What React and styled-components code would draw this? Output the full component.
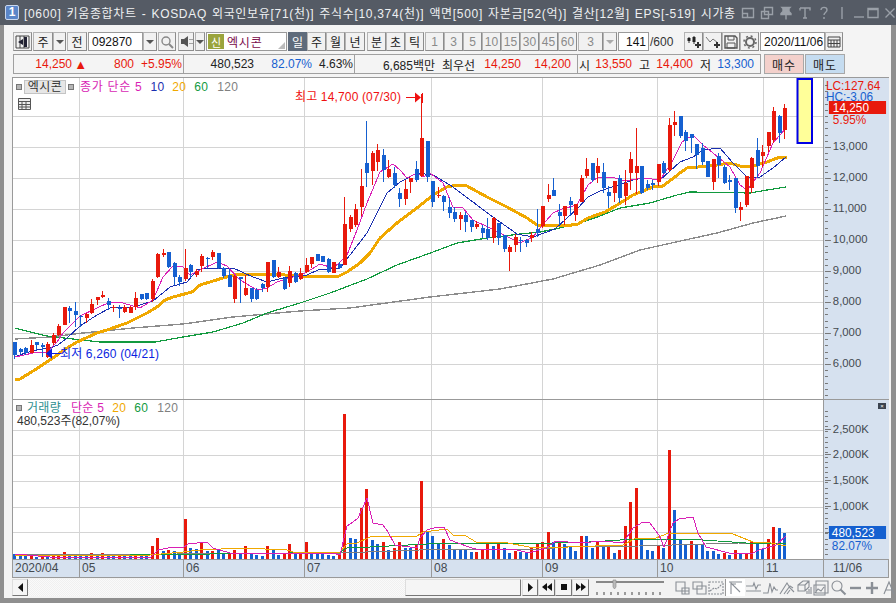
import React from "react";
import styled, { createGlobalStyle } from "styled-components";

const FONT = `"Liberation Sans", "Noto Sans CJK KR", sans-serif`;
const RED = "#e8190c";
const BLUE = "#1560d0";
const TXT = "#444a50";

const Global = createGlobalStyle`
  html, body { margin: 0; padding: 0; background: #f4f4f4; overflow: hidden; }
  * { box-sizing: border-box; }
`;

const Window = styled.div`
  width: 896px; height: 603px; display: flex; flex-direction: column;
  font-family: ${FONT}; font-size: 12px; color: #222; background: #f4f4f4;
`;
const TitleBar = styled.div`
  height: 25px; flex: none; background: #555b65; display: flex; align-items: center; padding: 0 6px 0 5px; color: #eef0f2;
`;
const Badge = styled.div`
  width: 14px; height: 15px; border-radius: 2px; background: #5b86c9; border: 1px solid #c9d7ee;
  color: #fff; font-weight: 700; font-size: 12px; line-height: 13px; text-align: center; flex: none;
`;
const TitleText = styled.div`
  margin-left: 5px; width: 716px; flex: none; font-size: 12px; letter-spacing: 0.68px; white-space: nowrap; overflow: hidden; word-spacing: 1px;
`;
const TitleIcons = styled.div`
  display: flex; align-items: center; margin-left: 1px;
`;
const TitleIcon = styled.svg`
  width: 14px; height: 14px; margin-right: ${p => p.$mr ?? 5}px; fill: none; stroke: #9aa0a8; stroke-width: 1.4; flex: none;
`;
const Body = styled.div`
  flex: 1; display: flex; flex-direction: column; padding: 7px 2px 2px 8px; background: #f4f4f4;
  border-left: 4px solid #8f8f8f; border-right: 5px solid #8f8f8f; border-bottom: 5px solid #8f8f8f;
`;
const Toolbar = styled.div`
  display: flex; height: 19px; padding-left: 1px; flex: none;
`;
const Btn = styled.div`
  width: ${p => p.$w}px; margin-left: ${p => p.$ml ?? 0}px; height: 19px; flex: none;
  display: flex; align-items: center; justify-content: center;
  background: ${p => p.$on ? "#5f6b7b" : "#f1f1f1"}; color: ${p => p.$on ? "#fff" : p.$dim ? "#8a8a8a" : "#222"};
  border: 1px solid ${p => p.$on ? "#5f6b7b" : "#b4b4b4"}; border-right-color: ${p => p.$on ? "#5f6b7b" : "#8c8c8c"}; border-bottom-color: ${p => p.$on ? "#5f6b7b" : "#8c8c8c"};
  font-size: 12px; white-space: nowrap;
`;
const Input = styled.div`
  width: ${p => p.$w}px; margin-left: ${p => p.$ml ?? 0}px; height: 19px; flex: none; background: #fff;
  border: 1px solid #9a9a9a; display: flex; align-items: center; justify-content: ${p => p.$right ? "flex-end" : "flex-start"};
  padding: 0 ${p => p.$right ? 2 : 3}px; font-size: 12px; color: #111; position: relative; white-space: nowrap;
`;
const NameTag = styled.span`
  width: 16px; height: 15px; margin-left: -2px; background: #9aa43c; color: #fff; display: flex; align-items: center; justify-content: center; font-size: 11px; margin-right: 3px; flex: none;
`;
const NameText = styled.span`
  color: #7a0a4a; font-size: 12px; letter-spacing: .8px;
`;
const Corner = styled.span`
  position: absolute; right: 1px; bottom: 1px; width: 0; height: 0; border-left: 7px solid transparent; border-bottom: 7px solid #bbb;
`;
const PlainLabel = styled.div`
  margin-left: 1px; width: 34px; flex: none; display: flex; align-items: center; font-size: 12px; color: #333;
`;
const Arrow = styled.span`
  width: 0; height: 0; border-left: 4px solid transparent; border-right: 4px solid transparent; border-top: 4px solid ${p => p.$c || "#555"};
`;
const InfoBar = styled.div`
  display: flex; height: 20px; margin: 3px 0 3px 1px; flex: none;
`;
const InfoGroup = styled.div`
  width: ${p => p.$w}px; height: 20px; flex: none; display: flex; align-items: center; position: relative;
  background: #f4f4f4; border: 1px solid #a0a0a0; border-left-width: ${p => p.$first ? 1 : 0}px; white-space: nowrap;
`;
const Val = styled.span`
  width: ${p => p.$w}px; flex: none; text-align: right; color: ${p => p.$c || "#222"}; font-size: ${p => p.$s || 12}px;
`;
const Trade = styled.div`
  width: ${p => p.$w}px; margin-left: ${p => p.$ml}px; height: 20px; flex: none; display: flex; align-items: center; justify-content: center;
  background: ${p => p.$bg}; border: 1px solid #a8a8a8; font-size: 12px; letter-spacing: 1px; color: #222;
`;
const Chart = styled.div`
  width: 877px; display: flex; flex-direction: column; border: 1px solid #9a9a9a; border-bottom: 0; flex: none; background: #fff;
`;
const Pane = styled.div`
  display: flex; height: ${p => p.$h}px; position: relative; flex: none; border-bottom: 1px solid #999;
`;
const Plot = styled.svg`
  width: 810px; height: 100%; display: block; flex: none; background: #fff; border-right: 0;
`;
const Axis = styled.svg`
  width: 66px; height: 100%; display: block; flex: none; background: #d6e1ef; border-left: 1px solid #999;
`;
const Legend = styled.div`
  position: absolute; left: ${p => p.$x}px; top: ${p => p.$y}px; display: flex; align-items: center; white-space: nowrap; font-size: 12px; line-height: 14px;
`;
const LegendItem = styled.span`
  color: ${p => p.$c}; margin-left: ${p => p.$ml ?? 8}px; letter-spacing: ${p => p.$ls ?? 0.3}px;
`;
const Sq = styled.span`
  width: 6px; height: 6px; background: #b5b5b5; border: 1px solid #777; display: inline-block; flex: none;
`;
const Chip = styled.span`
  margin-left: 2px; margin-right: 2px; width: 42px; height: 14px; background: #e6e6e6; border: 1px solid #c4c4c4; color: #333; display: flex; align-items: center; justify-content: center; font-size: 12px; letter-spacing: .5px;
`;
const GridIcon = styled.svg`
  position: absolute; left: 5px; top: 20px; width: 13px; height: 12px;
`;
const CloseMini = styled.span`
  position: absolute; right: 2px; top: 3px; width: 8px; height: 6px; background: #3c4450; color: #fff; font-size: 6px; line-height: 6px; text-align: center;
`;
const VolInfo = styled.div`
  position: absolute; left: 4px; top: 14px; font-size: 12px; color: #333; line-height: 14px; white-space: nowrap;
`;
const DateAxis = styled.div`
  display: flex; height: 18px; flex: none; background: #d6e1ef; border-bottom: 1px solid #999;
`;
const DateCell = styled.div`
  width: ${p => p.$w}px; flex: none; height: 100%; border-right: 1px solid #999; color: ${TXT}; font-size: 12px; line-height: 17px; padding-left: ${p => p.$pl ?? 2}px;
`;
const BottomBar = styled.div`
  height: 18px; width: 877px; display: flex; flex: none; align-items: center; background: #f2f2f2;
`;
const NavBtn = styled.div`
  width: ${p => p.$w ?? 16}px; margin-left: ${p => p.$ml ?? 0}px; height: 17px; flex: none; display: flex; align-items: center; justify-content: center;
  background: #f5f5f5; border: 1px solid #ddd; border-right-color: #777; border-bottom-color: #777;
`;
const Track = styled.div`
  width: 377px; height: 17px; flex: none; background: repeating-conic-gradient(#f0f0f0 0 25%, #fafafa 0 50%) 0 0 / 2px 2px;
`;
const Tool = styled.svg`
  width: ${p => p.$w ?? 17}px; height: 17px; flex: none; fill: none; stroke: #8a8f96; stroke-width: 1.1; background: ${p => p.$bg || "transparent"};
  border-left: ${p => p.$div ? "1px solid #999" : "0"};
`;
const Slider = styled.svg`
  width: 75px; height: 17px; margin-left: 5px; margin-right: 5px; flex: none;
`;

const seg = (base, arr) => arr.map(([c, a, b, d, e]) => [c, base + a / 3, base + b / 3, base + d / 3, base + e / 3]);
const r = "r", b = "b";
const candles = [
  ...seg(240, [[b,305,305,345,358],[b,325,328,335,342],[b,322,325,340,345],[r,300,316,340,340],[b,307,307,316,330],[b,310,314,322,350],[r,305,312,350,355],[r,280,285,310,315],[r,252,258,285,288],[r,200,202,255,255],
  [b,198,204,214,250],[b,186,213,225,260],[b,225,228,232,260],[r,220,222,235,250],[r,178,192,220,222],[r,170,172,180,195],[r,153,165,172,175],[b,175,183,195,210],[r,195,200,205,215],[b,195,205,207,233],
  [r,195,200,215,218],[r,198,200,218,220],[r,155,175,200,210],[b,162,162,178,180],[b,160,160,178,180],[r,118,123,178,185],[r,40,43,112,115],[r,28,38,45,50],[b,35,35,80,85],[b,65,70,112,135],
  [b,105,112,125,138],[r,28,85,118,122],[b,72,75,95,115],[r,88,93,105,110],[r,42,47,78,95],[b,50,55,58,85],[r,30,37,52,60],[b,40,40,85,88],[b,80,85,108,115],[b,88,105,140,142],
  [r,105,108,178,188],[b,110,112,116,188],[r,105,145,165,168],[b,145,145,178,185],[b,145,150,178,180],[b,130,132,145,155],[r,65,67,140,155],[b,60,60,112,115],[r,80,97,110,115],[b,110,113,148,150],
  [r,78,93,130,140],[b,95,100,125,128]]),
  ...seg(90, [[r,535,550,568,570],[r,505,525,545,550],[r,500,502,522,535],[b,492,492,512,514],[b,498,498,515,517],[b,505,507,545,548],[r,517,517,548,548],[b,515,522,535,537],
  [r,322,403,525,525],[r,375,380,417,425],[r,343,357,405,410],[r,238,288,350,378],[b,93,220,248,290],[r,183,188,243,285],[r,162,180,215,243],[b,178,195,240,275],[r,210,238,262,265],[b,232,250,285,293],
  [b,293,308,327,350],[r,270,297,327,345],[r,265,265,277,308],[b,213,237,270,275],[r,12,144,257,260],[b,153,153,260,275],[b,273,273,335,350],[r,292,315,317,325],[b,315,317,335,362],[b,325,350,370,385],
  [b,350,365,387,395],[r,365,375,388,420],[b,365,375,397,425],[b,390,390,412,425],[r,392,402,412,418],[b,405,413,430,445],[b,385,417,443,450],[r,382,385,443,460],[b,400,400,445,465],[b,435,435,477,485],
  [r,465,470,485,543],[r,432,440,465,485],[b,440,450,453,485],[b,447,450,460,470],[r,425,435,445,455],[b,358,417,430,440],[r,348,348,407,415]]),
  ...seg(130, [[r,162,195,207,215],[b,145,180,197,197],[b,222,247,258,285],[r,228,228,258,285],[b,200,213,225,258],[r,222,222,255,272],[r,135,145,215,215],[r,83,117,137,145],[b,100,100,150,155],[r,85,108,128,160]]),
  ...seg(100, [[b,190,215,263,278],[b,258,277,288,325],[r,243,243,278,305],[b,225,235,295,310],[r,210,250,288,315],[r,155,178,218,270],[r,85,198,218,283],[b,198,198,280,283],[b,240,252,265,270],[b,240,248,255,270],
  [r,193,193,245,258],[b,183,188,220,222],[r,55,75,210,215],[r,33,67,75,108],[b,47,47,108,115],[b,90,95,122,152],[b,103,103,115,158],[b,132,132,165,208],[b,130,145,187,195],[b,182,182,230,232],
  [r,178,178,245,270],[b,160,168,195,235],[b,195,200,250,252],[b,225,240,245,270],[b,235,235,323,338],[r,305,322,330,362],[r,228,228,315,320],[r,172,175,265,280],[b,113,150,198,235],[r,135,157,167,200],
  [r,97,97,137,155],[r,22,33,120,130],[b,45,47,100,128],[r,12,25,90,118]]),
];
const vol = "b5 b4 b4 r4 b2 r3 b2 r3 r3 r7 b3 b3 b3 b3 r6 b4 r6 b3 b3 r3 b3 b3 r3 b3 b3 r13 r21 b8 r9 b8 b5 r40 b11 b10 r16 b8 r8 b9 b5 r6 r9 b6 r13 b6 b4 b3 r13 b9 b4 r6 r15 b6 r6 r17 b6 b6 b5 b4 b3 r4 r145 b21 b20 r51 r70 b19 b15 r17 b9 r11 r17 b11 b11 r15 r78 b27 b23 b15 r20 b14 b9 b10 b10 b7 r7 r9 r16 b13 r16 b11 b6 r8 b7 b6 r11 r16 r17 r27 b17 r17 b15 b12 b8 r23 b23 b11 r17 b12 r14 b6 r9 r33 r57 r71 b19 b9 b8 r13 b11 r109 b49 b19 b14 r18 b14 b15 b8 b8 b5 r6 b4 r9 b6 r6 r17 b16 b10 r20 r32 b31 b26".split(" ");
const cx = i => Math.round(15.3 + 5.5 * i);
const col = c => (c === "r" ? RED : BLUE);

const pts = a => a.join(" ");
const ma5 = pts(["15,357","33,353","47,352","57,342","63,333","80,316","97,308","110,302","123,303","140,308","153,300","163,277","173,266","183,267","190,275","200,270","217,262","227,266","240,280","257,290","267,288","277,282","300,275","307,272","320,264","333,268","339,263","347,255","357,230","367,203","380,172","393,164","400,170","407,178","417,173","423,177","430,173","443,183","453,207","463,208","473,220","490,228","510,238","520,243","533,237","545,222","553,213","562,209","577,205","588,185","598,177","612,177","625,181","643,178","660,180","673,160","682,142","693,135","703,145","713,153","730,167","740,185","747,190","760,173","773,143","786,128"]);
const ma10 = pts(["15,357","25,353","37,350","50,348","58,345","67,338","80,326","97,315","110,308","133,307","153,301","170,287","187,282","197,270","207,268","233,268","253,277","267,282","283,278","300,276","307,275","318,270","340,268","367,233","387,193","400,182","417,173","433,175","450,185","473,202","493,217","517,234","533,237","555,229","578,208","588,197","600,191","612,187","633,180","643,178","660,180","680,162","693,157","703,150","720,148","733,163","747,177","760,177","773,168","786,157"]);
const ma20 = pts(["15,379","20,379","33,371","50,360","67,348","77,342","97,333","107,330","127,323","147,313","157,307","165,300","173,297","192,292","200,285","213,281","223,278","237,274","267,274","302,276","339,276","347,272","360,263","370,253","380,238","397,223","417,208","433,195","447,187","457,185","467,186","487,197","507,207","527,218","537,225","565,226","578,224","588,218","605,212","617,205","633,195","653,187","663,186","680,173","687,168","710,166","730,163","743,167","753,166","767,162","780,157","787,158"]);
const ma60 = pts(["15,328","30,332","47,336","73,339","100,342","123,342","155,342","183,337","213,332","243,323","267,313","300,303","330,293","367,279","397,265","433,252","457,243","487,238","520,234","540,232","560,228","580,223","600,216","620,208","650,203","677,195","690,192","750,193","767,190","786,187"]);
const ma120 = pts(["15,339","50,337","83,333","133,328","183,324","233,317","300,311","350,308","430,297","500,289","553,279","600,265","640,250","685,240","717,233","753,223","786,216"]);
const v5 = pts(["15,554","50,557","127,557","150,558","158,550","173,547","183,548","188,544","207,542","213,548","230,553","283,553","333,553","340,555","347,526","353,522","358,518","367,498","373,523","383,525","388,532","395,545","417,548","420,538","427,530","437,527","444,527","450,540","458,543","469,547","479,550","513,549","529,553","546,548","556,541","579,543","603,541","623,543","633,528","643,522","649,522","659,535","664,547","673,523","679,519","693,517","698,533","706,547","729,553","753,553","759,550","776,545","786,536"]);
const v20 = pts(["15,556","150,555","183,552","200,550","243,548","287,550","293,552","340,552","347,544","357,543","370,537","390,536","417,536","423,532","447,529","453,535","466,536","476,542","508,543","529,547","568,547","623,545","636,538","656,538","669,533","706,533","733,534","753,542","766,542","786,546"]);
const v60 = pts(["15,556","130,555","290,553","340,552","347,548","370,547","446,543","553,543","589,542","636,539","656,539","703,540","746,543","786,543"]);
const v120 = pts(["15,555","340,553","446,549","543,549","566,547","639,546","739,543","786,543"]);

const VX = [79, 183, 304, 431, 542, 657, 763];
const Line = ({ p, c, w = 1 }) => <polyline points={p} fill="none" stroke={c} strokeWidth={w} shapeRendering="crispEdges" strokeLinejoin="round" />;

function PricePlot() {
  const hs = [116, 147, 178, 209, 240, 271, 302, 333, 364];
  return (
    <Plot viewBox="13 78 810 321" preserveAspectRatio="none" style={{ fontFamily: FONT }}>
      {hs.map(y => <rect key={y} x="13" y={y} width="810" height="1" fill="#d4d4d4" />)}
      {VX.map(x => <rect key={x} x={x} y="78" width="1" height="321" fill="#d4d4d4" />)}
      <Line p={ma120} c="#8c8c8c" w={1.4} />
      <Line p={ma60} c="#129a3f" w={1.2} />
      <Line p={ma20} c="#f0a800" w={3} />
      <Line p={ma10} c="#1a2fb0" />
      <Line p={ma5} c="#d91fb5" />
      {candles.map((k, i) => {
        const x = cx(i), h = col(k[0]);
        return <g key={i} shapeRendering="crispEdges">
          <rect x={x - 1} y={k[1]} width="1" height={k[4] - k[1]} fill={h} />
          <rect x={x - 2} y={k[2]} width="4" height={Math.max(1, k[3] - k[2])} fill={h} />
        </g>;
      })}
      <rect x="797.5" y="79" width="14.5" height="64" fill="#ffff99" stroke="#0000e6" strokeWidth="2" />
      <text x="295" y="101" fontSize="12" letterSpacing=".15" fill="#f01010">최고 14,700 (07/30)</text>
      <rect x="406" y="97" width="10" height="1" fill="#f01010" />
      <path d="M415 92.5 L421 97.5 L415 102.5Z" fill="#f01010" />
      <rect x="422" y="93" width="1" height="10" fill="#f01010" />
      <text x="60" y="358" fontSize="12" letterSpacing=".15" fill="#0a1fe0">최저 6,260 (04/21)</text>
      <rect x="50" y="353" width="11" height="1" fill="#0a1fe0" />
      <path d="M52 348 L46 353.5 L52 359Z" fill="#0a1fe0" />
    </Plot>
  );
}

function VolPlot() {
  return (
    <Plot viewBox="13 400 810 159" preserveAspectRatio="none">
      {[430, 455, 481, 507, 532].map(y => <rect key={y} x="13" y={y} width="810" height="1" fill="#d4d4d4" />)}
      {VX.map(x => <rect key={x} x={x} y="400" width="1" height="159" fill="#d4d4d4" />)}
      {vol.map((v, i) => {
        const h = +v.slice(1);
        return <rect key={i} x={cx(i) - 2} y={559 - h} width="3" height={h} fill={col(v[0])} shapeRendering="crispEdges" />;
      })}
      <Line p={v120} c="#808080" w={1} />
      <Line p={v60} c="#129a3f" w={1} />
      <Line p={v20} c="#f0a800" w={1} />
      <Line p={v5} c="#d91fb5" />
    </Plot>
  );
}

const ticks = (from, to, step) => { const o = []; for (let y = from; y < to; y += step) o.push(y); return o; };

function PriceAxis() {
  const labels = [["13,000", 147], ["12,000", 178], ["11,000", 209], ["10,000", 240], ["9,000", 271], ["8,000", 302], ["7,000", 333], ["6,000", 364]];
  return (
    <Axis viewBox="823 78 66 321" preserveAspectRatio="none" style={{ fontFamily: FONT }}>
      {ticks(85, 397, 6.2).map(y => <rect key={y} x="824" y={Math.round(y)} width="3" height="1" fill="#777" />)}
      {labels.map(([t, y]) => <g key={t}>
        <rect x="824" y={y} width="6" height="1" fill="#777" />
        <text x="832" y={y + 3} fontSize="11.5" fill={TXT}>{t}</text>
      </g>)}
      <text x="825" y="90" fontSize="12" fill={RED}>LC:127.64</text>
      <text x="825" y="101" fontSize="12" fill={BLUE}>HC:-3.06</text>
      <rect x="828" y="101" width="58" height="13" fill={RED} />
      <text x="832" y="112" fontSize="12" fill="#fff">14,250</text>
      <text x="832" y="124" fontSize="12" fill={RED}>5.95%</text>
    </Axis>
  );
}

function VolAxis() {
  const labels = [["2,500K", 429], ["2,000K", 454], ["1,500K", 480], ["1,000K", 506], ["500K", 532]];
  return (
    <Axis viewBox="823 400 66 159" preserveAspectRatio="none" style={{ fontFamily: FONT }}>
      {ticks(411, 558, 5.1).map(y => <rect key={y} x="824" y={Math.round(y)} width="3" height="1" fill="#777" />)}
      {labels.map(([t, y]) => <g key={t}>
        <rect x="824" y={y} width="6" height="1" fill="#777" />
        <text x="832" y={y + 4} fontSize="11.5" fill={TXT}>{t}</text>
      </g>)}
      <rect x="828" y="526" width="58" height="13" fill={BLUE} />
      <text x="831" y="537" fontSize="12" fill="#fff">480,523</text>
      <text x="831" y="550" fontSize="12" fill={BLUE}>82.07%</text>
    </Axis>
  );
}

const T = ({ d, mr, f }) => <TitleIcon viewBox="0 0 14 14" $mr={mr}><path d={d} fill={f || "none"} /></TitleIcon>;

const Ico = ({ w = 16, h = 15, children }) => (
  <svg width={w} height={h} viewBox={`0 0 ${w} ${h}`} fill="none">{children}</svg>
);

export default function App() {
  const nums = ["1", "3", "5", "10", "15", "30", "45", "60"];
  return (
    <Window>
      <Global />
      <TitleBar>
        <Badge>1</Badge>
        <TitleText>[0600] 키움종합차트 - KOSDAQ 외국인보유[71(천)] 주식수[10,374(천)] 액면[500] 자본금[52(억)] 결산[12월] EPS[-519] 시가총</TitleText>
        <TitleIcons>
          <T d="M1.5 2.5h11v9h-11zM1.5 7.5h5v4" />
          <T d="M4.5 1.5h8v7h-8zM1.5 5.5h7v7h-7z" />
          <T d="M3 1.5h8l-1 1v3l2 2v1H2V7.5l2-2v-3zM7 8.5v5" f="#9aa0a8" />
          <T d="M2 2h10v2.5M2 2v2.5M7 2v10M5 12h4" />
          <T d="M4 4c0-3.5 6-3.5 6 0 0 2.5-3 2.5-3 5M7 11v2" mr={4} />
          <T d="M7 1v12" mr={3} />
          <T d="M2 11h10" mr={0} />
          <T d="M2 2.5h10v9H2zM2 3.5h10" mr={3} />
          <T d="M2.5 2.5l9 9M11.5 2.5l-9 9" mr={0} />
        </TitleIcons>
      </TitleBar>
      <Body>
        <Toolbar>
          <Btn $w={19}><Ico w={15} h={15}><path d="M1 2h13v12H1z" stroke="#444" /><path d="M5 2v12M9 2v12" stroke="#444" /><path d="M8 5L3 8l5 3zM9 3h3v10H9z" fill="#223" /></Ico></Btn>
          <Btn $w={20} $ml={1}>주</Btn>
          <Btn $w={13}><Arrow /></Btn>
          <Btn $w={20} $ml={1}>전</Btn>
          <Input $w={55} $ml={1}>092870</Input>
          <Btn $w={14}><Arrow /></Btn>
          <Btn $w={18} $ml={1}><Ico w={14} h={14}><circle cx="6" cy="6" r="4" stroke="#888" strokeWidth="1.4" /><path d="M9 9l4 4" stroke="#888" strokeWidth="2" /></Ico></Btn>
          <Btn $w={16} $ml={2}><Ico w={13} h={13}><path d="M1 4h3l4-3v11L4 9H1z" fill="#555" /><path d="M10 4v1M10 8v1M12 4v1M12 8v1" stroke="#555" /></Ico></Btn>
          <Btn $w={10} $ml={1}><Arrow /></Btn>
          <Input $w={81} $ml={1}>
            <NameTag>신</NameTag><NameText>엑시콘</NameText><Corner />
          </Input>
          <Btn $w={19} $ml={1} $on>일</Btn>
          <Btn $w={19}>주</Btn>
          <Btn $w={19}>월</Btn>
          <Btn $w={20}>년</Btn>
          <Btn $w={19} $ml={2}>분</Btn>
          <Btn $w={19}>초</Btn>
          <Btn $w={19}>틱</Btn>
          {nums.map((n, i) => <Btn key={n} $w={19} $ml={i === 0 ? 1 : 0} $dim>{n}</Btn>)}
          <Btn $w={25} $ml={1} $dim>3</Btn>
          <Btn $w={14} $dim><Arrow $c="#aaa" /></Btn>
          <Input $w={31} $ml={1} $right>141</Input>
          <PlainLabel>/600</PlainLabel>
          <Btn $w={19} $ml={0}><Ico w={16} h={15}><path d="M3 3v6M8 2v8" stroke="#333" /><path d="M1.5 4h3v3h-3zM6.5 3h3v5h-3z" fill="#222" /><path d="M12 8v6M9 11h6" stroke="#333" strokeWidth="2" /></Ico></Btn>
          <Btn $w={19}><Ico w={16} h={15}><path d="M1 3l4 5 3-3 5 4" stroke="#777" /><path d="M12 8v6M9 11h6" stroke="#333" strokeWidth="2" /></Ico></Btn>
          <Btn $w={18}><Ico w={14} h={14}><path d="M1 1h10l2 2v10H1z" stroke="#555" strokeWidth="1.4" /><path d="M4 1v4h6V1M3 8h8v5H3z" stroke="#555" /></Ico></Btn>
          <Btn $w={19}><Ico w={14} h={14}><circle cx="7" cy="7" r="4" stroke="#666" strokeWidth="2" /><circle cx="7" cy="7" r="6" stroke="#666" strokeWidth="1.5" strokeDasharray="2 2.7" /></Ico></Btn>
          <Input $w={65} $ml={1}>2020/11/06</Input>
          <Btn $w={18}><Ico w={14} h={12}><path d="M1 1h12v10H1zM1 4h12M4 4v7M7 4v7M10 4v7M1 7.5h12" stroke="#444" /></Ico></Btn>
        </Toolbar>
        <InfoBar>
          <InfoGroup $w={171} $first>
            <Val $w={58} $c={RED}>14,250</Val>
            <Val $w={15} $c={RED} $s={13}>▲</Val>
            <Val $w={47} $c={RED}>800</Val>
            <Val $w={48} $c={RED}>+5.95%</Val>
          </InfoGroup>
          <InfoGroup $w={171}>
            <Val $w={70}>480,523</Val>
            <Val $w={58} $c={BLUE}>82.07%</Val>
            <Val $w={41}>4.63%</Val>
          </InfoGroup>
          <InfoGroup $w={223}>
            <Val $w={80}>6,685백만</Val>
            <Val $w={40}>최우선</Val>
            <Val $w={46} $c={RED}>14,250</Val>
            <Val $w={50} $c={RED}>14,200</Val>
          </InfoGroup>
          <InfoGroup $w={183}>
            <Val $w={12}>시</Val>
            <Val $w={42} $c={RED}>13,550</Val>
            <Val $w={18}>고</Val>
            <Val $w={43} $c={RED}>14,400</Val>
            <Val $w={18}>저</Val>
            <Val $w={43} $c={BLUE}>13,300</Val>
          </InfoGroup>
          <Trade $w={40} $ml={3} $bg="#f3d0cb">매수</Trade>
          <Trade $w={40} $ml={1} $bg="#c5dcf0">매도</Trade>
        </InfoBar>
        <Chart>
          <Pane $h={322}>
            <PricePlot />
            <PriceAxis />
            <Legend $x={3} $y={2}>
              <Sq /><Chip>엑시콘</Chip><Sq />
              <LegendItem $c="#d91fb5" $ml={6} $ls={0.7}>종가 단순 5</LegendItem>
              <LegendItem $c="#1a2fb0">10</LegendItem>
              <LegendItem $c="#f0a800">20</LegendItem>
              <LegendItem $c="#129a3f">60</LegendItem>
              <LegendItem $c="#808080" $ml={9}>120</LegendItem>
            </Legend>
            <GridIcon viewBox="0 0 13 12"><path d="M.5.5h12v11H.5zM.5 3.5h12M.5 6.5h12M.5 9h12M4 3.5V12M8 3.5V12" stroke="#555" fill="#eee" /></GridIcon>
          </Pane>
          <Pane $h={160}>
            <VolPlot />
            <VolAxis />
            <Legend $x={3} $y={1}>
              <Sq />
              <LegendItem $c="#2f8f8f" $ml={5}>거래량</LegendItem>
              <LegendItem $c="#d91fb5" $ml={10}>단순 5</LegendItem>
              <LegendItem $c="#f0a800">20</LegendItem>
              <LegendItem $c="#129a3f">60</LegendItem>
              <LegendItem $c="#808080" $ml={9}>120</LegendItem>
            </Legend>
            <VolInfo>480,523주(82,07%)</VolInfo>
            <CloseMini>×</CloseMini>
          </Pane>
          <DateAxis>
            <DateCell $w={67}>2020/04</DateCell>
            <DateCell $w={104}>05</DateCell>
            <DateCell $w={121}>06</DateCell>
            <DateCell $w={127}>07</DateCell>
            <DateCell $w={111}>08</DateCell>
            <DateCell $w={115}>09</DateCell>
            <DateCell $w={106}>10</DateCell>
            <DateCell $w={60}>11</DateCell>
            <DateCell $w={65} $pl={9}>11/06</DateCell>
          </DateAxis>
        </Chart>
        <BottomBar>
          <NavBtn><Ico w={7} h={9}><path d="M6 0v9L1 4.5z" fill="#111" /></Ico></NavBtn>
          <Track />
          <NavBtn $w={116} />
          <NavBtn $w={16} $ml={1}><Ico w={7} h={9}><path d="M1 0v9l5-4.5z" fill="#111" /></Ico></NavBtn>
          <NavBtn $w={17}><Ico w={10} h={8}><path d="M5 0v8L0 4zM10 0v8L5 4z" fill="#111" /></Ico></NavBtn>
          <NavBtn $w={17}><Ico w={8} h={8}><path d="M1 1h6v6H1z" fill="#111" /></Ico></NavBtn>
          <NavBtn $w={17}><Ico w={10} h={8}><path d="M0 0v8l5-4zM5 0v8l5-4z" fill="#111" /></Ico></NavBtn>
          <Slider viewBox="0 0 75 17">
            <path d="M2 3h68" stroke="#888" strokeWidth="2" /><path d="M19 1h3v7l-1.5 2L19 8z" fill="#bbb" stroke="#888" strokeWidth=".6" />
            <path d="M3 13v3M10 13v3M17 13v3M24 13v3M31 13v3M38 13v3M45 13v3M52 13v3M59 13v3M66 13v3" stroke="#444" />
          </Slider>
          <Tool viewBox="0 0 17 17"><path d="M2 3h9v9H2zM8 9h7v6H8zM11 9v6M8 12h7" /></Tool>
          <Tool viewBox="0 0 17 17"><path d="M2 3h9v7H2zM6 7h9v8H6z" /></Tool>
          <Tool viewBox="0 0 17 17" strokeDasharray="2 1"><path d="M1 3h14v12H1zM2 12l4-3 3 1 5-5" /></Tool>
          <Tool viewBox="0 0 17 17" $bg="#fff" $div $w={20}><path d="M2 3h13M4 15V4l9 9M4 5l5 0M4 5v5" /></Tool>
          <Tool viewBox="0 0 17 17"><path d="M1 7h7l1-3 2 6 2-4h3M1 12h15" /></Tool>
          <Tool viewBox="0 0 17 17"><path d="M1 14h5l2-10 2 9 2-5 2 3h2" /></Tool>
          <Tool viewBox="0 0 17 17"><path d="M1 15l7-11 3 5 4 4M5 15l6-8 3 2M8 15l3-4" /></Tool>
          <Tool viewBox="0 0 17 17"><path d="M2 6l5-4h6v6l-4 4H2zM2 6h7v6M9 6l4-4M11 15v-3M13 15v-5M15 15v-7" /></Tool>
          <Tool viewBox="0 0 17 17"><path d="M3 2h12v12H3zM1 6h11v10H1zM2 14l3-4 3 2 3-4" /></Tool>
          <Tool viewBox="0 0 17 17" strokeWidth="1.5"><circle cx="7" cy="7" r="5" /><path d="M10.5 10.5l5 5" strokeWidth="2" /></Tool>
          <Tool viewBox="0 0 17 17"><path d="M3 9h11" strokeWidth="2.4" /></Tool>
          <Tool viewBox="0 0 17 17"><path d="M2 9h12M8 3v12" strokeWidth="2.4" /></Tool>
          <Tool viewBox="0 0 17 17" strokeWidth="2"><path d="M3 15L8 3l5 12M5 11h6" /></Tool>
        </BottomBar>
      </Body>
    </Window>
  );
}
